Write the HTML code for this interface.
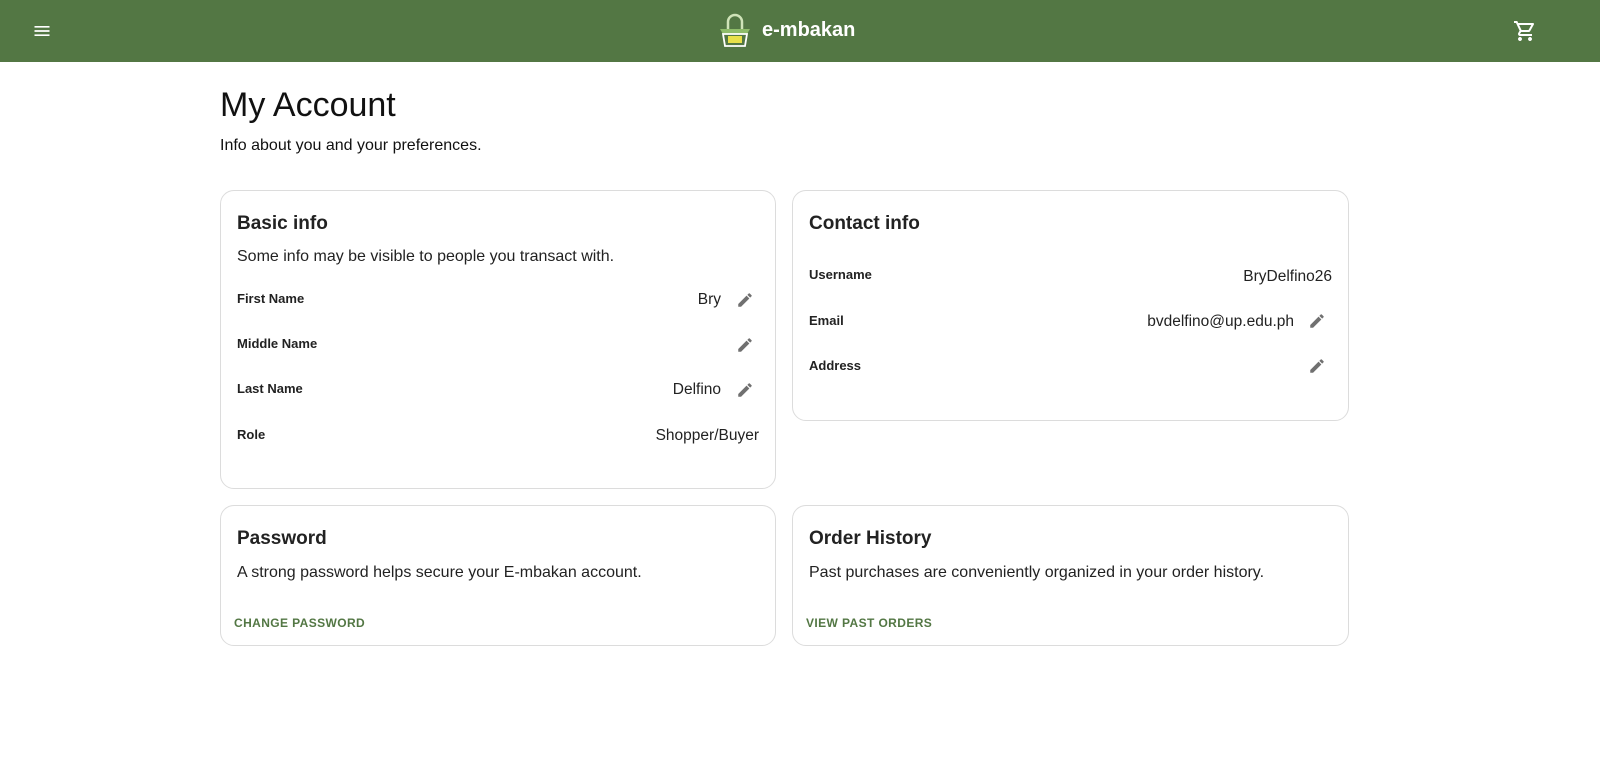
<!DOCTYPE html>
<html><head><style>
body{margin:0;font-family:"Liberation Sans",sans-serif;background:#fff;color:#1a1a1a;width:1600px;height:766px;overflow:hidden;position:relative}
.hdr{position:absolute;left:0;top:0;width:1600px;height:62px;background:#537744}
.card{position:absolute;border:1px solid #dcdcdc;border-radius:14px;background:#fff;box-sizing:border-box}
.t{position:absolute;font-size:19px;font-weight:bold;color:#222}
.d{position:absolute;font-size:16px;color:#222}
.l{position:absolute;font-size:13px;font-weight:bold;color:#222}
.v{position:absolute;font-size:15.5px;color:#222;text-align:right}
.e{position:absolute;width:18px;height:18px}
.b{position:absolute;font-size:12px;font-weight:bold;color:#537744;letter-spacing:.4px}
</style></head><body>
<div class="hdr">
<svg style="position:absolute;left:32px;top:21px" width="20" height="20" viewBox="0 0 24 24"><path d="M3 18h18v-2H3v2zm0-5h18v-2H3v2zm0-7v2h18V6H3z" fill="#fff"/></svg>
<svg style="position:absolute;left:718px;top:12px" width="34" height="38" viewBox="0 0 34 38"><path d="M10 17V10a7 7 0 0 1 14 0v7" fill="none" stroke="#cfe3b8" stroke-width="2.5"/><path d="M2 17h30l-3 5H5z" fill="#8ebc6a"/><path d="M5 22h24l-2 12H7z" fill="#537744" stroke="#fff" stroke-width="1.8"/><rect x="10" y="24" width="14" height="7" fill="#e8e04a"/></svg>
<div style="position:absolute;left:762px;top:19px;font-size:20px;font-weight:bold;color:#fff">e-mbakan</div>
<svg style="position:absolute;left:1513px;top:19px" width="24" height="24" viewBox="0 0 24 24"><path d="M15.55 13c.75 0 1.41-.41 1.75-1.03l3.58-6.490A.996.996 0 0 0 20.01 4H5.21l-.94-2H1v2h2l3.6 7.59-1.35 2.44C4.520 15.37 5.48 17 7 17h12v-2H7l1.1-2h7.45zM6.16 6h12.15l-2.76 5H8.53L6.16 6zM7 18c-1.1 0-1.99.9-1.99 2S5.9 22 7 22s2-.9 2-2-.9-2-2-2zm10 0c-1.1 0-1.99.9-1.99 2s.89 2 1.990 2 2-.9 2-2-.9-2-2-2z" fill="#fff"/></svg>
</div>
<div style="position:absolute;left:220px;top:86px;font-size:34px;color:#111">My Account</div>
<div style="position:absolute;left:220px;top:137px;font-size:16px;color:#111">Info about you and your preferences.</div>

<div class="card" style="left:220px;top:190px;width:556px;height:299px">
<div class="t" style="left:16px;top:22px">Basic info</div>
<div class="d" style="left:16px;top:57px">Some info may be visible to people you transact with.</div>
<div class="l" style="left:16px;top:100px">First Name</div><div class="v" style="right:54px;top:100px">Bry</div>
<div class="l" style="left:16px;top:145px">Middle Name</div>
<div class="l" style="left:16px;top:190px">Last Name</div><div class="v" style="right:54px;top:190px">Delfino</div>
<div class="l" style="left:16px;top:236px">Role</div><div class="v" style="right:16px;top:236px">Shopper/Buyer</div>
<svg class="e" style="left:515px;top:100px" viewBox="0 0 24 24"><path d="M3 17.25V21h3.75L17.81 9.94l-3.75-3.75L3 17.25zM20.71 7.04a1 1 0 0 0 0-1.41l-2.34-2.34a1 1 0 0 0-1.41 0l-1.83 1.83 3.75 3.75 1.83-1.83z" fill="#707070"/></svg>
<svg class="e" style="left:515px;top:145px" viewBox="0 0 24 24"><path d="M3 17.25V21h3.75L17.81 9.94l-3.75-3.75L3 17.25zM20.71 7.04a1 1 0 0 0 0-1.41l-2.34-2.34a1 1 0 0 0-1.41 0l-1.83 1.83 3.75 3.75 1.83-1.83z" fill="#707070"/></svg>
<svg class="e" style="left:515px;top:190px" viewBox="0 0 24 24"><path d="M3 17.25V21h3.75L17.81 9.94l-3.75-3.75L3 17.25zM20.71 7.04a1 1 0 0 0 0-1.41l-2.34-2.34a1 1 0 0 0-1.41 0l-1.83 1.83 3.75 3.75 1.83-1.83z" fill="#707070"/></svg>
</div>

<div class="card" style="left:792px;top:190px;width:557px;height:231px">
<div class="t" style="left:16px;top:22px">Contact info</div>
<div class="l" style="left:16px;top:76px">Username</div><div class="v" style="right:16px;top:77px">BryDelfino26</div>
<div class="l" style="left:16px;top:122px">Email</div><div class="v" style="right:54px;top:122px">bvdelfino@up.edu.ph</div>
<div class="l" style="left:16px;top:167px">Address</div>
<svg class="e" style="left:515px;top:121px" viewBox="0 0 24 24"><path d="M3 17.25V21h3.75L17.81 9.94l-3.75-3.75L3 17.25zM20.71 7.04a1 1 0 0 0 0-1.41l-2.34-2.34a1 1 0 0 0-1.41 0l-1.83 1.83 3.75 3.75 1.83-1.83z" fill="#707070"/></svg>
<svg class="e" style="left:515px;top:166px" viewBox="0 0 24 24"><path d="M3 17.25V21h3.75L17.81 9.94l-3.75-3.75L3 17.25zM20.71 7.04a1 1 0 0 0 0-1.41l-2.34-2.34a1 1 0 0 0-1.41 0l-1.83 1.83 3.75 3.75 1.83-1.83z" fill="#707070"/></svg>
</div>

<div class="card" style="left:220px;top:505px;width:556px;height:141px">
<div class="t" style="left:16px;top:22px">Password</div>
<div class="d" style="left:16px;top:58px">A strong password helps secure your E-mbakan account.</div>
<div class="b" style="left:13px;top:110px">CHANGE PASSWORD</div>
</div>
<div class="card" style="left:792px;top:505px;width:557px;height:141px">
<div class="t" style="left:16px;top:22px">Order History</div>
<div class="d" style="left:16px;top:58px">Past purchases are conveniently organized in your order history.</div>
<div class="b" style="left:13px;top:110px">VIEW PAST ORDERS</div>
</div>
</body></html>
